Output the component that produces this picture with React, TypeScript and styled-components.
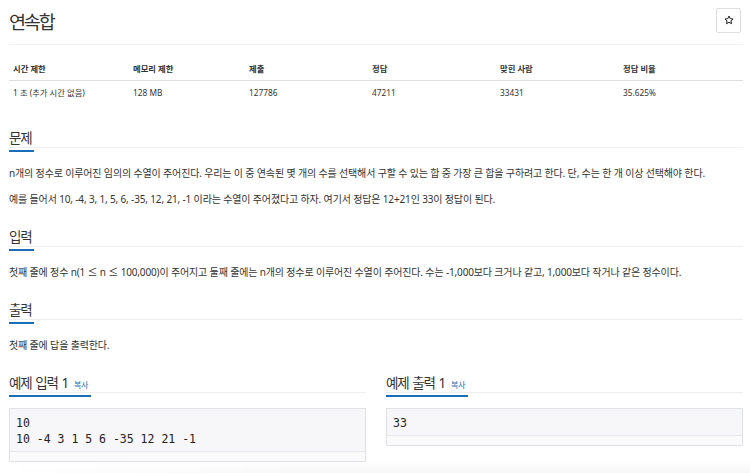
import styled, { createGlobalStyle } from "styled-components";

const GlobalStyle = createGlobalStyle`
	html, body {
		margin: 0;
		padding: 0;
		background: #ffffff;
	}
	body {
		font-family: "Noto Sans", "Noto Sans CJK KR", sans-serif;
		color: #333333;
		overflow: hidden;
	}
`;

const Page = styled.div`
	width: 734px;
	margin-left: 9px;
`;

const TitleBar = styled.div`
	display: flex;
	justify-content: space-between;
	align-items: center;
	height: 45px;
	border-bottom: 1px solid #eeeeee;
	box-sizing: border-box;
	padding-bottom: 3px;
`;

const Title = styled.h1`
	margin: 0;
	font-size: 18.5px;
	font-weight: 400;
	letter-spacing: -2.2px;
	color: #333333;
`;

const StarButton = styled.button`
	width: 25px;
	height: 25px;
	margin-right: 2px;
	padding: 0 0 1px;
	border: 1px solid #dddddd;
	border-radius: 2px;
	background: #ffffff;
	display: flex;
	align-items: center;
	justify-content: center;
`;

const InfoTable = styled.div`
	display: grid;
	grid-template-columns: 120px 116px 123px 128px 123px 1fr;
	margin-top: 13px;
	font-size: 8.3px;
`;

const Cell = styled.div<{ $head?: boolean }>`
	padding: 0 4px;
	height: ${(p) => (p.$head ? "22px" : "23px")};
	line-height: ${(p) => (p.$head ? "22px" : "24px")};
	font-weight: ${(p) => (p.$head ? 700 : 400)};
	border-bottom: ${(p) => (p.$head ? "1px solid #dddddd" : "none")};
	white-space: nowrap;
`;

const Section = styled.section<{ $gap: number }>`
	margin-top: ${(p) => p.$gap}px;
`;

const Headline = styled.div`
	height: 22px;
	border-bottom: 1px solid #eeeeee;
	box-sizing: border-box;
`;

const HeadText = styled.h2`
	display: inline-block;
	margin: 0;
	height: 22px;
	padding-right: 3px;
	font-size: 13.5px;
	line-height: 16px;
	font-weight: 400;
	letter-spacing: -1.2px;
	word-spacing: 1.5px;
	color: #333333;
	border-bottom: 2px solid #1a6db8;
	box-sizing: border-box;
`;

const CopyLink = styled.span`
	font-size: 8px;
	letter-spacing: -0.5px;
	color: #1a6db8;
	margin-left: 6px;
`;

const Paragraph = styled.p`
	margin: 0;
	font-size: 10px;
	line-height: 26px;
	letter-spacing: -0.15px;
	color: #333333;
`;

const Body = styled.div`
	margin-top: 12px;
`;

const Samples = styled.div`
	display: grid;
	grid-template-columns: 357px 357px;
	gap: 20px;
	margin-top: 13px;
`;

const SampleBox = styled.div`
	margin-top: 15px;
	background: #f7f7f9;
	border: 1px solid #e1e1e8;
	box-sizing: border-box;
`;

const Pre = styled.pre`
	margin: 0;
	padding: 6px 6px 4px;
	font-family: "DejaVu Sans Mono", "Liberation Mono", monospace;
	font-size: 11.5px;
	line-height: 16px;
	color: #222222;
`;

const ScrollTrack = styled.div`
	height: 9px;
	border-top: 1px solid #e8e8ea;
	background: #fafafa;
`;

const BottomFade = styled.div`
	position: fixed;
	left: 0;
	right: 0;
	bottom: 0;
	height: 12px;
	background: linear-gradient(to right, rgba(0, 0, 0, 0), rgba(0, 0, 0, 0.03) 40%, rgba(0, 0, 0, 0.03));
	-webkit-mask-image: linear-gradient(to bottom, transparent, black);
	mask-image: linear-gradient(to bottom, transparent, black);
	pointer-events: none;
`;

const stats = [
	["시간 제한", "1 초 (추가 시간 없음)"],
	["메모리 제한", "128 MB"],
	["제출", "127786"],
	["정답", "47211"],
	["맞힌 사람", "33431"],
	["정답 비율", "35.625%"],
];

const samples = [
	{ title: "예제 입력 1", text: "10\n10 -4 3 1 5 6 -35 12 21 -1" },
	{ title: "예제 출력 1", text: "33" },
];

const StarIcon = () => (
	<svg width="10" height="10" viewBox="0 0 24 24" fill="none" stroke="#222" strokeWidth="2.4" strokeLinejoin="round">
		<polygon points="12,2.5 14.9,8.9 21.8,9.6 16.6,14.2 18.1,21 12,17.5 5.9,21 7.4,14.2 2.2,9.6 9.1,8.9" />
	</svg>
);

export default function App() {
	return (
		<>
			<GlobalStyle />
			<Page>
				<TitleBar>
					<Title>연속합</Title>
					<StarButton>
						<StarIcon />
					</StarButton>
				</TitleBar>

				<InfoTable>
					{stats.map(([head]) => (
						<Cell $head key={head}>
							{head}
						</Cell>
					))}
					{stats.map(([head, value]) => (
						<Cell key={head + "v"}>{value}</Cell>
					))}
				</InfoTable>

				<Section $gap={22}>
					<Headline>
						<HeadText>문제</HeadText>
					</Headline>
					<Body>
						<Paragraph>
							n개의 정수로 이루어진 임의의 수열이 주어진다. 우리는 이 중 연속된 몇 개의 수를 선택해서 구할 수 있는 합
							중 가장 큰 합을 구하려고 한다. 단, 수는 한 개 이상 선택해야 한다.
						</Paragraph>
						<Paragraph>
							예를 들어서 10, -4, 3, 1, 5, 6, -35, 12, 21, -1 이라는 수열이 주어졌다고 하자. 여기서 정답은 12+21인
							33이 정답이 된다.
						</Paragraph>
					</Body>
				</Section>

				<Section $gap={13}>
					<Headline>
						<HeadText>입력</HeadText>
					</Headline>
					<Body>
						<Paragraph>
							첫째 줄에 정수 n(1 ≤ n ≤ 100,000)이 주어지고 둘째 줄에는 n개의 정수로 이루어진 수열이 주어진다. 수는
							-1,000보다 크거나 같고, 1,000보다 작거나 같은 정수이다.
						</Paragraph>
					</Body>
				</Section>

				<Section $gap={13}>
					<Headline>
						<HeadText>출력</HeadText>
					</Headline>
					<Body>
						<Paragraph>첫째 줄에 답을 출력한다.</Paragraph>
					</Body>
				</Section>

				<Samples>
					{samples.map((s) => (
						<div key={s.title}>
							<Headline>
								<HeadText>
									{s.title}
									<CopyLink>복사</CopyLink>
								</HeadText>
							</Headline>
							<SampleBox>
								<Pre>{s.text}</Pre>
								<ScrollTrack />
							</SampleBox>
						</div>
					))}
				</Samples>
			</Page>
			<BottomFade />
		</>
	);
}
